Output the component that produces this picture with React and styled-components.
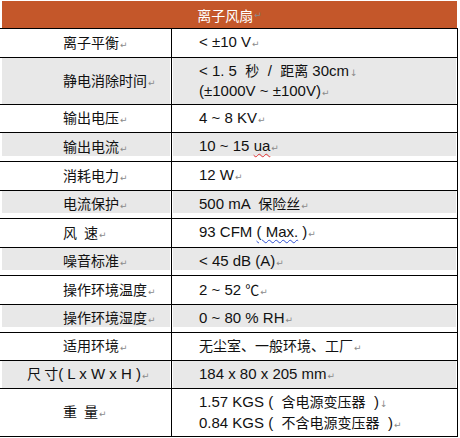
import React from 'react';
import styled, { createGlobalStyle } from 'styled-components';

const Global = createGlobalStyle`
  html, body { margin: 0; padding: 0; background: #fff; }
  body { font-family: "Liberation Sans", "Noto Sans CJK SC", sans-serif; color: #111; }
`;

const Table = styled.div`
  width: 458px;
  display: flex;
  flex-direction: column;
`;

const HeaderRow = styled.div`
  padding: 1px 1px 0 2px;
  border-bottom: 1px solid #000;
`;

const HeaderBar = styled.div`
  height: 27px;
  background: #c4572a;
  color: #fff;
  display: flex;
  align-items: center;
  justify-content: center;
  font-size: 14px;
  font-family: "Noto Sans CJK SC", sans-serif;
`;

const Row = styled.div`
  display: grid;
  grid-template-columns: 172px 286px;
  height: ${(p) => p.$h}px;
  box-sizing: border-box;
  border-bottom: 1px solid #000;
`;

const Cell = styled.div`
  display: flex;
  padding: 0 1px 0 ${(p) => (p.$label ? 2 : 1)}px;
  border-right: 1px solid #000;
`;

const Shade = styled.div`
  flex: 1;
  display: flex;
  flex-direction: column;
  justify-content: center;
  align-items: flex-start;
  padding-left: ${(p) => p.$indent}px;
  background: ${(p) =>
    p.$gray
      ? `linear-gradient(#e8e8e8, #e8e8e8) top left / 100% calc(100% - ${p.$strip ? 5 : 0}px) no-repeat`
      : 'transparent'};
  font-size: 15px;
  line-height: 18px;
  white-space: pre;
`;

const Line = styled.div`
  white-space: pre;
`;

const Han = styled.span`
  font-family: "Noto Sans CJK SC", sans-serif;
  font-size: 14px;
`;

const Mark = styled.span`
  font-family: "DejaVu Sans", sans-serif;
  font-size: 9px;
  color: #8a8a8a;
  margin-left: 1px;
`;

const Wavy = styled.span`
  text-decoration: underline wavy ${(p) => p.$c};
  text-decoration-thickness: 1px;
  text-underline-offset: 2px;
`;

const P = () => <Mark>↵</Mark>;
const B = () => <Mark>↓</Mark>;

const rows = [
  { h: 29, label: <><Han>离子平衡</Han><P /></>, value: [<>&lt; ±10 V<P /></>] },
  {
    h: 47, gray: true, label: <><Han>静电消除时间</Han><P /></>,
    value: [
      <>&lt; 1. 5  <Han>秒</Han>  /  <Han>距离</Han> 30cm<B /></>,
      <>(±1000V ~ ±100V)<P /></>,
    ],
  },
  { h: 28, label: <><Han>输出电压</Han><P /></>, value: [<>4 ~ 8 KV<P /></>] },
  { h: 29, gray: true, strip: true, label: <><Han>输出电流</Han><P /></>, value: [<>10 ~ 15 <Wavy $c="#e03030">ua</Wavy><P /></>] },
  { h: 29, label: <><Han>消耗电力</Han><P /></>, value: [<>12 W<P /></>] },
  { h: 28, gray: true, strip: true, label: <><Han>电流保护</Han><P /></>, value: [<>500 mA  <Han>保险丝</Han><P /></>] },
  { h: 29, label: <><Han>风{'\u2002'}速</Han><P /></>, value: [<>93 CFM <Wavy $c="#3050d0">( Max.</Wavy> )<P /></>] },
  { h: 28, gray: true, strip: true, label: <><Han>噪音标准</Han><P /></>, value: [<>&lt; 45 dB (A)<P /></>] },
  { h: 29, label: <><Han>操作环境温度</Han><P /></>, value: [<>2 ~ 52 <Han>℃</Han><P /></>] },
  { h: 28, gray: true, strip: true, label: <><Han>操作环境湿度</Han><P /></>, value: [<>0 ~ 80 % RH<P /></>] },
  { h: 28, label: <><Han>适用环境</Han><P /></>, value: [<><Han>无尘室、一般环境、工厂</Han><P /></>] },
  { h: 28, gray: true, indent: 25, label: <><Han>尺 寸</Han>( L x W x H )<P /></>, value: [<>184 x 80 x 205 mm<P /></>] },
  {
    h: 48, label: <><Han>重{'\u2002'}量</Han><P /></>,
    value: [
      <>1.57 KGS (  <Han>含电源变压器</Han>  )<B /></>,
      <>0.84 KGS (  <Han>不含电源变压器</Han>  )<P /></>,
    ],
  },
];

export default function App() {
  return (
    <>
      <Global />
      <Table>
        <HeaderRow>
          <HeaderBar>离子风扇<P /></HeaderBar>
        </HeaderRow>
        {rows.map((r, i) => (
          <Row key={i} $h={r.h}>
            <Cell $label>
              <Shade $indent={r.indent ?? 61} $gray={r.gray} $strip={r.strip}>
                <Line>{r.label}</Line>
              </Shade>
            </Cell>
            <Cell>
              <Shade $indent={26} $gray={r.gray} $strip={r.strip}>
                {r.value.map((v, j) => (
                  <Line key={j}>{v}</Line>
                ))}
              </Shade>
            </Cell>
          </Row>
        ))}
      </Table>
    </>
  );
}
